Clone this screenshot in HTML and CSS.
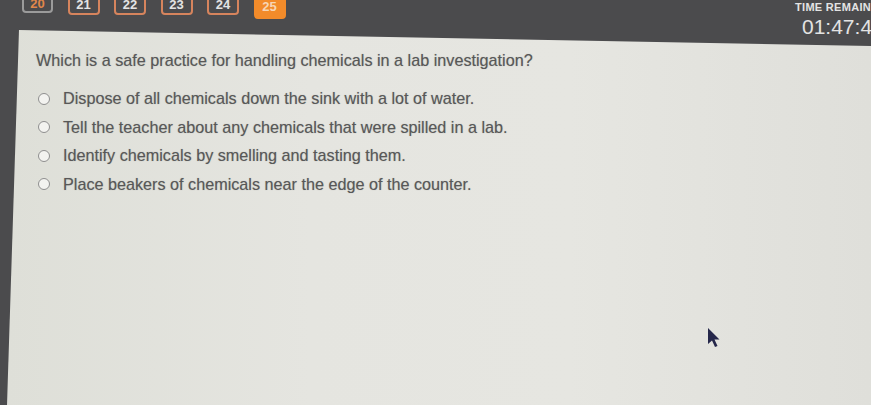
FILE: index.html
```html
<!DOCTYPE html>
<html lang="en">
<head>
<meta charset="utf-8">
<title>Question 25</title>
<link rel="stylesheet" href="styles.css">
</head>
<body>
<div class="screen">
  <header class="topbar">
    <nav class="qnav">
      <span class="qbtn qbtn-done"><span class="flag">20</span></span>
      <span class="qbtn">21</span>
      <span class="qbtn">22</span>
      <span class="qbtn">23</span>
      <span class="qbtn">24</span>
      <span class="qbtn qbtn-current">25</span>
    </nav>
    <div class="timer">
      <div class="timer-label">TIME REMAINING</div>
      <div class="timer-value">01:47:43</div>
    </div>
  </header>
  <main class="panel">
    <p class="question">Which is a safe practice for handling chemicals in a lab investigation?</p>
    <ul class="options">
      <li class="option"><span class="radio"></span><span class="option-text">Dispose of all chemicals down the sink with a lot of water.</span></li>
      <li class="option"><span class="radio"></span><span class="option-text">Tell the teacher about any chemicals that were spilled in a lab.</span></li>
      <li class="option"><span class="radio"></span><span class="option-text">Identify chemicals by smelling and tasting them.</span></li>
      <li class="option"><span class="radio"></span><span class="option-text">Place beakers of chemicals near the edge of the counter.</span></li>
    </ul>
  </main>
  <svg class="cursor" width="14" height="22" viewBox="0 0 14 22" aria-hidden="true">
    <path d="M1 1 L1 17 L5 13.5 L8 20 L10.5 19 L7.5 12.5 L12.5 12.5 Z" fill="#25274a"/>
  </svg>
</div>
</body>
</html>
```
FILE: styles.css
```css
html, body {
  margin: 0;
  height: 100%;
}

body {
  background: #4b4b4d;
  overflow: hidden;
  font-family: "Liberation Sans", Arial, sans-serif;
}

.screen {
  position: relative;
  height: 405px;
  overflow: hidden;
}

.topbar {
  height: 30px;
  display: flex;
  align-items: flex-start;
}

.qnav {
  display: flex;
  align-items: flex-start;
  gap: 14.5px;
  margin-left: 22px;
}

.qbtn {
  box-sizing: border-box;
  width: 32px;
  height: 24px;
  margin-top: -9px;
  padding-top: 3px;
  border: 2px solid #d6845d;
  border-radius: 4px;
  display: flex;
  align-items: center;
  justify-content: center;
  color: #e4e4e4;
  font-size: 13px;
  font-weight: bold;
}

.qbtn-done {
  width: 31px;
  height: 22px;
  border-color: #9b9b9b;
}

.flag {
  color: #e0874a;
}

.qbtn-current {
  height: 28px;
  background: #f28b2a;
  border-color: #f28b2a;
  color: #f7d6b5;
}

.timer {
  flex: none;
  width: 76px;
  margin-left: auto;
  white-space: nowrap;
  color: #e3e3e3;
}

.timer-label {
  margin-top: 1px;
  font-size: 11px;
  line-height: 12px;
  font-weight: bold;
  letter-spacing: 0.3px;
}

.timer-value {
  margin-top: 2px;
  padding-left: 7px;
  font-size: 21px;
  line-height: 24px;
}

.panel {
  box-sizing: border-box;
  height: 375px;
  margin-left: 7px;
  padding: 21px 0 0 29px;
  background: linear-gradient(to right, #dedfd8 0%, #e5e5e0 35%, #e6e6e1 65%, #dfdfda 100%);
  clip-path: polygon(12px 0, 100% 16px, 100% 100%, 0 100%);
  color: #585858;
  text-shadow: 0 0 1px rgba(90, 90, 90, 0.45);
}

.question {
  margin: 0;
  font-size: 16.2px;
  line-height: 19px;
}

.options {
  list-style: none;
  margin: 19px 0 0;
  padding: 0;
  display: flex;
  flex-direction: column;
  gap: 9.5px;
}

.option {
  display: flex;
  align-items: center;
  gap: 13px;
  font-size: 16.2px;
  line-height: 19px;
}

.radio {
  box-sizing: border-box;
  width: 12px;
  height: 12px;
  margin-left: 2px;
  border: 1.5px solid #8e8e8e;
  border-radius: 50%;
  background: #f3f3f0;
}

.cursor {
  position: absolute;
  left: 707px;
  top: 327px;
  filter: blur(0.5px);
}
```
